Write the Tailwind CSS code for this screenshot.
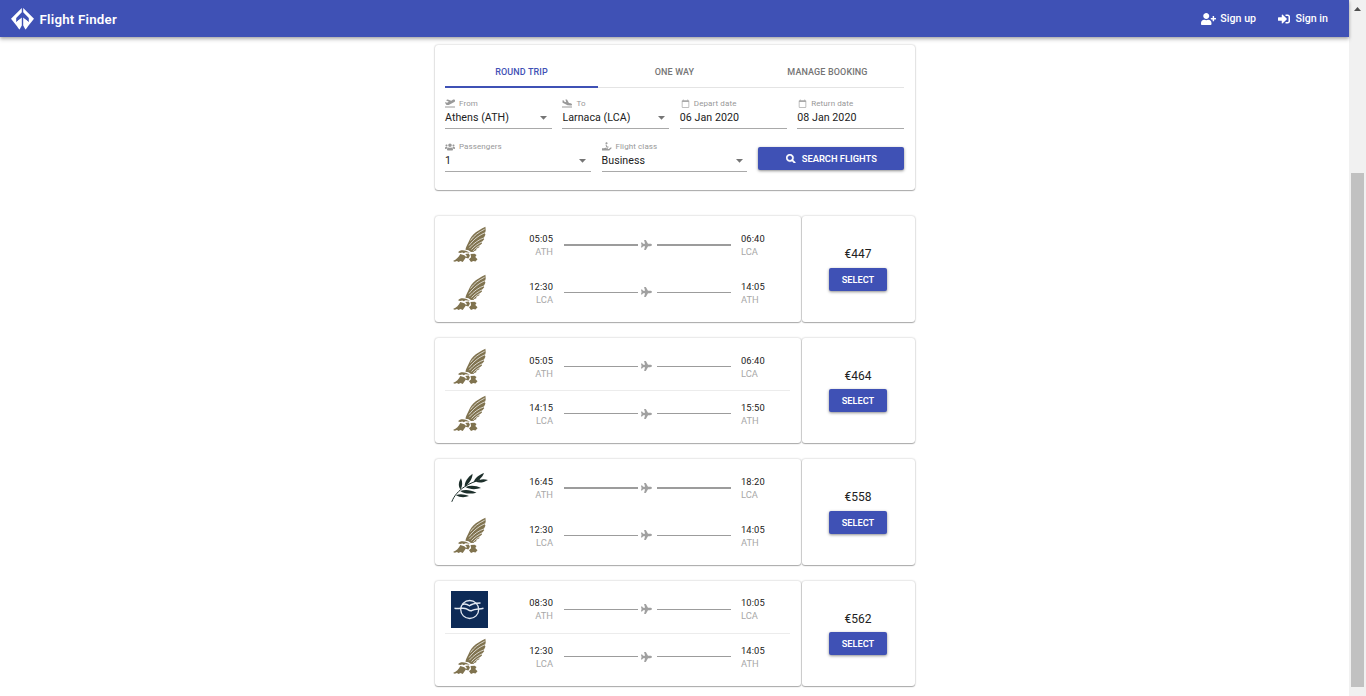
<!DOCTYPE html>
<html lang="en">
<head>
<meta charset="utf-8">
<title>Flight Finder</title>
<script src="https://cdn.jsdelivr.net/npm/@tailwindcss/browser@4"></script>
</head>
<body class="h-[696px] overflow-hidden bg-white font-['Roboto',sans-serif] text-[#212121]">
<svg class="hidden">
  <symbol id="plane" viewBox="0 0 576 512"><path d="M480 192H365.710L260.610 8.060A16.014 16.014 0 0 0 246.710 0h-65.500c-10.630 0-18.300 10.170-15.380 20.390L214.860 192H112l-43.200-57.600c-3.020-4.030-7.770-6.400-12.800-6.400H16.010C5.600 128-2.040 137.780.490 147.880L32 256 .490 364.120C-2.040 374.220 5.600 384 16.010 384H56c5.040 0 9.780-2.370 12.800-6.400L112 320h102.860l-49.030 171.600c-2.920 10.220 4.750 20.400 15.380 20.400h65.500c5.740 0 11.040-3.080 13.890-8.060L365.710 320H480c35.350 0 96-28.650 96-64s-60.650-64-96-64z"/></symbol>
  <symbol id="eagle" viewBox="0 0 37 37">
    <path fill="#80734f" d="M34.400.8C29.500 3.300 25.500 5.500 22.300 8.500C19.300 11.800 18.300 14.500 17 17.300C16 19.500 14.700 21.300 14.500 23.800L17.500 24.300L20 25.900L23 25.800L23.200 24.900L25.300 24.300L25.300 22.800L28.300 21.300L28.300 19.800L31 17.500L30.700 16L33.200 13.300L32.800 12L34.400 8.800L33.900 7.300L34.700 4.800Z"/>
    <g fill="#80734f"><path d="M7 26.200C8.500 24.100 11.800 23.700 15 24.700L19 26.800L14.500 26.200L12.800 27.300L11.300 26.400L9 27Z"/><path d="M9.300 27.900L13.300 29.300L15.200 31L11.700 35.900L9.500 34.900L7.500 36L6 34.900L3.800 35.700L2 34.900C5.500 33.600 7.800 31 9.300 27.900Z"/><path d="M14.200 28L17.800 27.600L18.900 29.800L17.400 32.400L14.600 31.700L15.900 29.900Z"/><path d="M19.500 28L23.600 27.800L25.500 29L24.300 31L26.500 33.300L24.500 35.600L22.300 35L20 36L18 33.300L20.100 31.300Z"/></g>
    <g fill="none" stroke="#fff" stroke-width=".7"><path d="M34 6.800C29 8.600 23 13 18 19.500M33.200 11.800C28 13.300 22.500 17.500 18.300 22.200M31 15.900C27.500 17.500 23.500 20 20.500 23.600M33.700 3.200C28 6 23 9.500 19.500 14.500M28.500 19.700C26 21 24 22.600 22.300 24.800"/></g>
  </symbol>
  <symbol id="olive" viewBox="0 0 37 37"><g fill="#1d2f2b">
    <path fill="none" stroke="#1d2f2b" stroke-width="1" d="M.8 32.800C3 26.600 8 21.400 13.500 17.800C18 14.600 24 12.600 29 10.600"/>
    <path d="M9.400 20.500C7 17 7.500 13 10 9.300C11.800 13 11.600 17.500 9.400 20.500ZM13.800 17.700C13.300 13.300 16.800 8.300 21.500 4.800C21.700 9.500 18.300 14.700 13.800 17.700ZM22.700 13.200C23.900 9.300 27.700 5.800 33 4C31.300 8.500 27.800 12 22.700 13.200ZM25 12.800C28.500 10 32.500 9.500 37 10.900C33 13.400 28.500 14.100 25 12.800ZM14.500 18C19.500 16 25 16.500 30 19C24.500 20.800 18.500 20.500 14.500 18ZM9.200 22C14 20.200 19.500 20.700 25.500 23.700C19.500 25.100 13.500 25 9.200 22ZM5 26.200C8.500 24.500 13.500 25 18 27.100C13.500 28.700 8.500 28.500 5 26.200Z"/>
  </g></symbol>
  <symbol id="aegean" viewBox="0 0 37 37"><rect width="37" height="37" fill="#0d2a56"/><g fill="none" stroke="#e3e9f2" stroke-width="1.300"><circle cx="18.700" cy="18.500" r="9"/><path stroke-width="1.500" d="M3.500 17.300C9 18.300 12 16 15.500 17.800C17.500 19 19 20.200 20.500 19.700C24 17.600 28 18.500 32.500 17.300"/><path stroke-width="1.400" d="M11 13.500C14 12.300 16 13 18.500 14.800C21 12.500 23.500 12.300 29.500 12"/></g></symbol>
  <symbol id="calendar" viewBox="0 0 24 24"><path d="M20 3h-1V1h-2v2H7V1H5v2H4c-1.100 0-2 .9-2 2v16c0 1.100.9 2 2 2h16c1.100 0 2-.9 2-2V5c0-1.100-.9-2-2-2zm0 18H4V8h16v13z"/></symbol>
</svg>

<div class="flex h-full">
  <div class="min-w-0 flex-1">
    <header class="relative flex h-[37px] items-center bg-[#3f51b5] pl-[11px] pr-[21px] text-white shadow-[0_1px_3px_rgba(0,0,0,.25),0_3px_4px_rgba(0,0,0,.16)]">
      <svg class="mt-px h-[22px] w-[23px]" viewBox="0 0 23 22" fill="#fff"><path d="M10.800 0V4.300L5.200 9.900V14.300L8.600 11.200V21.500L0 10.800ZM12.200 0V4.300L17.800 9.900V14.300L14.400 11.200V21.500L23 10.800Z"/><path d="M5.200 14.200L10.800 9.600V17.500L8.600 21.500L6.800 19.500V15.500ZM17.800 14.200L12.200 9.600V17.500L14.400 21.500L16.200 19.500V15.500Z"/></svg>
      <span class="ml-[5.500px] mt-[2px] text-[13.300px] font-semibold leading-5 tracking-[.22px]">Flight Finder</span>
      <div class="ml-auto flex items-center text-[10.670px] font-medium">
        <svg class="mr-1 h-[12px] w-[15px]" viewBox="0 0 640 512" fill="#fff"><path d="M624 208h-64v-64c0-8.800-7.200-16-16-16h-32c-8.800 0-16 7.200-16 16v64h-64c-8.800 0-16 7.200-16 16v32c0 8.800 7.200 16 16 16h64v64c0 8.800 7.200 16 16 16h32c8.800 0 16-7.200 16-16v-64h64c8.800 0 16-7.200 16-16v-32c0-8.800-7.200-16-16-16zm-400 48c70.700 0 128-57.300 128-128S294.700 0 224 0 96 57.300 96 128s57.300 128 128 128zm89.600 32h-16.700c-22.200 10.200-46.900 16-72.900 16s-50.600-5.800-72.900-16h-16.700C60.200 288 0 348.200 0 422.400V464c0 26.500 21.500 48 48 48h352c26.500 0 48-21.500 48-48v-41.600c0-74.200-60.200-134.400-134.400-134.400z"/></svg>
        <span>Sign up</span>
        <svg class="ml-[21.500px] mr-[6px] h-[12px] w-[12px]" viewBox="0 0 512 512" fill="#fff"><path d="M416 448h-84c-6.600 0-12-5.400-12-12v-40c0-6.600 5.400-12 12-12h84c17.700 0 32-14.300 32-32V160c0-17.700-14.300-32-32-32h-84c-6.600 0-12-5.400-12-12V76c0-6.600 5.400-12 12-12h84c53 0 96 43 96 96v192c0 53-43 96-96 96zm-47-209L201 71c-15-15-41-4.500-41 17v96H24c-13.300 0-24 10.700-24 24v96c0 13.300 10.700 24 24 24h136v96c0 21.500 26 32 41 17l168-168c9.300-9.400 9.300-24.600 0-34z"/></svg>
        <span>Sign in</span>
      </div>
    </header>

    <main class="mx-auto w-[480px] pt-2">
      <section class="h-[145px] rounded-[3px] bg-white pl-[10.500px] pt-[10px] shadow-[0_1px_1px_rgba(0,0,0,.28),0_0_2px_rgba(0,0,0,.3)]">
        <nav class="flex h-[33px] w-[459px] border-b border-[#e4e4e4] text-center text-[9px] font-medium leading-[34px] tracking-[.12px] text-[#757575]">
          <span class="h-[33px] flex-1 border-b-2 border-[#3f51b5] text-[#3f51b5]">ROUND TRIP</span>
          <span class="flex-1">ONE WAY</span>
          <span class="flex-1">MANAGE BOOKING</span>
        </nav>
        <div id="route" class="mt-[11px] grid w-[459px] grid-cols-4 gap-x-[10.670px]"></div>
        <div class="mt-[13px] grid w-[459px] grid-cols-3 gap-x-[10.670px]">
          <div id="extras" class="col-span-2 grid grid-cols-2 gap-x-[10.670px]"></div>
          <button class="mt-[5px] flex h-[23px] items-center justify-center rounded-[2px] bg-[#3f51b5] pl-px text-[9.330px] font-semibold text-white shadow-[0_1px_3px_rgba(0,0,0,.45)]">
            <svg class="mr-[6px] h-[9.500px] w-[9.500px]" viewBox="0 0 512 512" fill="#fff" stroke="#fff" stroke-width="20"><path d="M505 442.700L405.300 343c-4.500-4.500-10.600-7-17-7H372c27.600-35.300 44-79.700 44-128C416 93.100 322.900 0 208 0S0 93.100 0 208s93.100 208 208 208c48.300 0 92.700-16.400 128-44v16.300c0 6.400 2.500 12.500 7 17l99.700 99.700c9.400 9.400 24.600 9.400 33.900 0l28.300-28.300c9.400-9.400 9.400-24.600.1-34zM208 336c-70.700 0-128-57.200-128-128 0-70.700 57.200-128 128-128 70.700 0 128 57.200 128 128 0 70.700-57.200 128-128 128z"/></svg>SEARCH FLIGHTS
          </button>
        </div>
      </section>
      <div id="results" class="mt-[26px] flex flex-col gap-[16px]"></div>
    </main>
  </div>

  <div class="flex w-[17px] flex-col items-center bg-[#f1f1f1]">
    <svg class="mt-[7px] h-[4px] w-[7px]" viewBox="0 0 7 4" fill="#505050"><path d="M0 4L3.500 0L7 4Z"/></svg>
    <div class="mt-[162px] h-[514px] w-[13px] bg-[#c1c1c1]"></div>
  </div>
</div>

<script>
const icons = {
  depart: '<svg class="h-[9px] w-[10px]" viewBox="0 0 640 512" fill="#999"><path d="M624 448H16c-8.800 0-16 7.200-16 16v32c0 8.800 7.200 16 16 16h608c8.800 0 16-7.200 16-16v-32c0-8.800-7.200-16-16-16zM80.600 341.300c6 6.800 14.400 10.600 23.200 10.700l97.500.2c23 0 45.700-5.500 66.300-16.100l297.900-153.300c27.400-14.100 52.300-34.300 66.600-62.400 16-31.600 17.800-54.500 11.200-71.600-6.600-17.200-22.300-33.300-54.900-42.300-29.100-8-59.600-.9-87 13.200L400.700 72 176.800-1c-7-2-14.500-1.600-21 1.800L91 34c-10.500 5.400-12.600 20-4.200 28.500L247.100 151 129.300 211.700l-74.700-38.200c-5.600-2.900-12.300-2.900-17.800 0L8.800 188c-9.800 5-12 18.300-4.500 26.500z"/></svg>',
  arrive: '<svg class="h-[9px] w-[10px]" viewBox="0 0 640 512" fill="#999"><path d="M624 448H16c-8.800 0-16 7.200-16 16v32c0 8.800 7.200 16 16 16h608c8.800 0 16-7.200 16-16v-32c0-8.800-7.200-16-16-16zM44.800 205.700l277.100 145c20.300 11.200 42.600 18 65.600 20.300l156 15c29 1.400 59.400-.3 83.300-18.500 27-20.500 12.700-55.500-3.200-76-17-22.300-44-37.600-73.600-45.500L443.300 217.500 327.400 16.100c-3.800-6-9.800-10.300-16.700-12.100L240 0c-11.300-1.500-20.800 9.300-17.600 20.200L270.700 173 150.300 141 119 69c-2.400-5.600-7.300-9.800-13.200-11.400L55 44c-9.900-2.600-19.600 5-19.700 15.300L32 183.500c.2 9 5 17.400 12.800 22.200z"/></svg>',
  date: '<svg class="ml-px h-[9px] w-[9px]" fill="#aaa"><use href="#calendar"/></svg>',
  people: '<svg class="h-[8px] w-[10px]" viewBox="0 0 640 512" fill="#999"><path d="M96 224c35.300 0 64-28.700 64-64s-28.700-64-64-64-64 28.700-64 64 28.700 64 64 64zm448 0c35.300 0 64-28.700 64-64s-28.700-64-64-64-64 28.700-64 64 28.700 64 64 64zm32 32h-64c-17.600 0-33.500 7.100-45.100 18.600 40.300 22.100 68.900 62 75.100 109.400h66c17.700 0 32-14.300 32-32v-32c0-35.300-28.700-64-64-64zm-256 0c61.900 0 112-50.100 112-112S381.900 32 320 32 208 82.100 208 144s50.100 112 112 112zm76.800 32h-8.300c-20.800 10-43.900 16-68.500 16s-47.600-6-68.500-16h-8.300C179.600 288 128 339.600 128 403.200V432c0 26.500 21.500 48 48 48h288c26.500 0 48-21.500 48-48v-28.800c0-63.600-51.600-115.200-115.200-115.200zM173.100 274.600C161.500 263.100 145.600 256 128 256H64c-35.300 0-64 28.700-64 64v32c0 17.700 14.300 32 32 32h65.900c6.300-47.400 34.900-87.300 75.200-109.400z"/></svg>',
  seat: '<svg class="h-[9px] w-[10px]" viewBox="0 0 20 18" fill="none" stroke="#999"><circle cx="9" cy="2.500" r="1.600" fill="#999"/><path stroke-width="2" d="M8 5.500L9.500 10H13"/><path stroke="none" fill="#999" d="M0 12.500H4L7 11.500H12V13.300H8V14H13.500L18 10.500L19.500 12L14.500 17.200H0Z"/></svg>'
};
const field = (icon, label, value, select) => `
  <div class="h-[30px] border-b border-[#a9a9a9]">
    <div class="flex h-[9px] items-center gap-[4px] whitespace-nowrap text-[8px] leading-[9px] tracking-[.1px] text-[#989898]">${icons[icon]}<span>${label}</span></div>
    <div class="flex items-center justify-between text-[10.670px] leading-[19px] tracking-[.04px]"><span>${value}</span>${select ? '<svg class="mr-[4.500px] h-[4px] w-[7px]" viewBox="0 0 7 4" fill="#757575"><path d="M0 0H7L3.500 3.700Z"/></svg>' : ''}</div>
  </div>`;
document.getElementById('route').innerHTML =
  field('depart', 'From', 'Athens (ATH)', true) + field('arrive', 'To', 'Larnaca (LCA)', true) +
  field('date', 'Depart date', '06 Jan 2020') + field('date', 'Return date', '08 Jan 2020');
document.getElementById('extras').innerHTML =
  field('people', 'Passengers', '1', true) + field('seat', 'Flight class', 'Business', true);

const thin = 'h-px', thick = 'h-[2px]';
const leg = (logo, t1, a1, t2, a2, line, nudge) => `
  <div class="flex h-[37px] items-center pl-[6px]">
    <svg class="h-[37px] w-[37px]"><use href="#${logo}"/></svg>
    <div class="w-[65.500px] text-right text-[9.330px] leading-[13px] ${nudge}"><div class="tracking-[.1px]">${t1}</div><div class="text-[#a8a8a8]">${a1}</div></div>
    <div class="ml-[10.500px] w-[74px] bg-[#9c9c9c] ${line}"></div>
    <svg class="mr-[4.500px] ml-[3.500px] h-[10px] w-[11px]" fill="#a0a0a0"><use href="#plane"/></svg>
    <div class="w-[74px] bg-[#9c9c9c] ${line}"></div>
    <div class="ml-[10.500px] text-[9.330px] leading-[13px] ${nudge}"><div class="tracking-[.1px]">${t2}</div><div class="text-[#a8a8a8]">${a2}</div></div>
  </div>`;
const flights = [
  ['eagle', '05:05', '06:40', '12:30', '14:05', '€447', thick, '', '', 'pt-px', 'pt-px'],
  ['eagle', '05:05', '06:40', '14:15', '15:50', '€464', thin, 'bg-[#ececec]', 'pt-px', '', ''],
  ['olive', '16:45', '18:20', '12:30', '14:05', '€558', thick, '', '', 'pt-px', 'pt-px'],
  ['aegean', '08:30', '10:05', '12:30', '14:05', '€562', thin, 'bg-[#ececec]', '', '', '']
];
document.getElementById('results').innerHTML = flights.map(f => `
  <article class="flex h-[105.500px] gap-px">
    <div class="w-[366px] rounded-[3px] bg-white px-[10px] pt-[10.200px] shadow-[0_1px_1px_rgba(0,0,0,.28),0_0_2px_rgba(0,0,0,.3)]">
      ${leg(f[0], f[1], 'ATH', f[2], 'LCA', f[6], f[8])}
      <div class="flex h-[10.800px] w-[345px] items-center"><div class="h-px w-full ${f[7]}"></div></div>
      ${leg('eagle', f[3], 'LCA', f[4], 'ATH', thin, f[9])}
    </div>
    <div class="flex w-[113px] flex-col items-center rounded-[3px] bg-white pt-[29px] shadow-[0_1px_1px_rgba(0,0,0,.28),0_0_2px_rgba(0,0,0,.3)]">
      <div class="text-[12px] leading-[18px]">${f[5]}</div>
      <button class="mt-[4.800px] h-[23px] w-[58px] rounded-[2px] bg-[#3f51b5] text-[9.200px] font-semibold text-white shadow-[0_1px_3px_rgba(0,0,0,.45)] ${f[10]}">SELECT</button>
    </div>
  </article>`).join('');
</script>
</body>
</html>
